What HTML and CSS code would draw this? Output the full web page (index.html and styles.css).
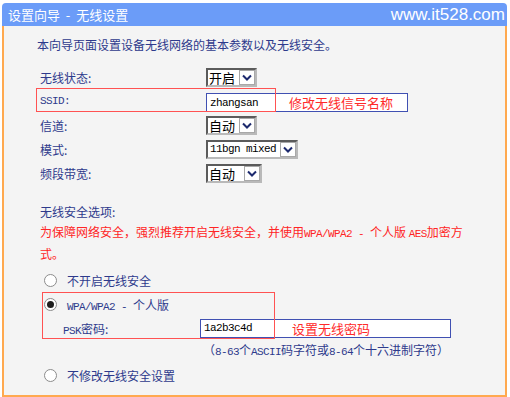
FILE: index.html
```
<!DOCTYPE html>
<html lang="zh-CN">
<head>
    <meta charset="UTF-8">
    <title>设置向导 - 无线设置</title>
    <link rel="stylesheet" href="styles.css">
</head>
<body>
<div class="page">
    <div class="titlebar">
        <span class="title">设置向导  -  无线设置</span>
        <span class="site">www.it528.com</span>
    </div>
    <div class="panel">
        <p class="intro">本向导页面设置设备无线网络的基本参数以及无线安全。</p>

        <div class="form">
            <div class="row">
                <span class="label">无线状态:</span>
                <span class="select w-short"><span class="opt">开启</span><span class="btn"><svg width="10" height="7" viewBox="0 0 10 7"><polyline points="1,1.5 5,5.5 9,1.5"/></svg></span></span>
            </div>
            <div class="row mark-wrap">
                <span class="label en">SSID:</span>
                <span class="field ssid"><span class="val en">zhangsan</span><span class="note">修改无线信号名称</span></span>
                <span class="mark mark-ssid"></span>
            </div>
            <div class="row">
                <span class="label">信道:</span>
                <span class="select w-short"><span class="opt">自动</span><span class="btn"><svg width="10" height="7" viewBox="0 0 10 7"><polyline points="1,1.5 5,5.5 9,1.5"/></svg></span></span>
            </div>
            <div class="row">
                <span class="label">模式:</span>
                <span class="select w-mode"><span class="opt en">11bgn mixed</span><span class="btn"><svg width="10" height="7" viewBox="0 0 10 7"><polyline points="1,1.5 5,5.5 9,1.5"/></svg></span></span>
            </div>
            <div class="row">
                <span class="label">频段带宽:</span>
                <span class="select w-band"><span class="opt">自动</span><span class="btn"><svg width="10" height="7" viewBox="0 0 10 7"><polyline points="1,1.5 5,5.5 9,1.5"/></svg></span></span>
            </div>
        </div>

        <p class="sec-title">无线安全选项:</p>
        <p class="warn">为保障网络安全，强烈推荐开启无线安全，并使用<span class="en">WPA/WPA2 - </span>个人版 <span class="en">AES</span>加密方<br>式。</p>

        <div class="opts">
            <div class="opt-row"><span class="radio"></span><span>不开启无线安全</span></div>
            <div class="wpa mark-wrap">
                <div class="opt-row"><span class="radio checked"></span><span><span class="en">WPA/WPA2 - </span>个人版</span></div>
                <div class="psk-row">
                    <span class="psk-label"><span class="en">PSK</span>密码:</span>
                    <span class="field psk"><span class="val en">1a2b3c4d</span><span class="note">设置无线密码</span></span>
                </div>
                <span class="mark mark-wpa"></span>
            </div>
            <div class="hint">（<span class="en">8-63</span>个<span class="en">ASCII</span>码字符或<span class="en">8-64</span>个十六进制字符）</div>
            <div class="opt-row last"><span class="radio"></span><span>不修改无线安全设置</span></div>
        </div>
    </div>
</div>
</body>
</html>
```

FILE: styles.css
```
body {
    margin: 0;
    background: #ffffff;
    font-family: "Noto Sans CJK SC", sans-serif;
    font-size: 12px;
    color: #2e3a8c;
}

p {
    margin: 0;
}

.en {
    font-family: "Liberation Mono", "Noto Sans CJK SC", monospace;
    font-size: 11px;
    letter-spacing: -0.6px;
}

.page {
    width: 505px;
    margin: 3px 0 0 2px;
}

.titlebar {
    height: 23px;
    background: #6b9cf8;
    border-radius: 4px 4px 0 0;
    display: flex;
    align-items: center;
    justify-content: space-between;
    color: #ffffff;
}

.title {
    font-size: 13px;
    padding-left: 6px;
    white-space: pre;
}

.site {
    font-family: "Liberation Sans", sans-serif;
    font-size: 17px;
    padding-right: 2px;
}

.panel {
    box-sizing: border-box;
    height: 371px;
    background: #f4f4f4;
    border: 2px solid #ffa94f;
    border-top: none;
    padding: 7px 0 0 33px;
}

.intro {
    line-height: 24px;
}

.form {
    margin-top: 8px;
    padding-left: 3px;
}

.row {
    display: flex;
    align-items: center;
    height: 24px;
}

.label {
    width: 166px;
}

.mark-wrap {
    position: relative;
}

.mark {
    position: absolute;
    border: 1.5px solid #ff5252;
    pointer-events: none;
}

.mark-ssid {
    left: -4px;
    top: -1px;
    width: 238px;
    height: 22px;
}

.select {
    box-sizing: border-box;
    display: inline-flex;
    align-items: center;
    height: 19px;
    background: #ffffff;
    border: 2px solid;
    border-color: #5b5b5b #b9b9b9 #b9b9b9 #5b5b5b;
    color: #000000;
}

.w-short {
    width: 51px;
}

.w-mode {
    width: 92px;
}

.w-band {
    width: 56px;
}

.opt {
    flex: 1;
    font-size: 13px;
    line-height: 15px;
    padding-left: 1px;
    white-space: pre;
}

.opt.en {
    font-size: 11px;
    padding-left: 2px;
}

.btn {
    box-sizing: border-box;
    width: 16px;
    height: 15px;
    border: 1px solid #a8a8a8;
    background: #ffffff;
    display: flex;
    align-items: center;
    justify-content: center;
}

.btn polyline {
    fill: none;
    stroke: #1d2a6e;
    stroke-width: 2;
}

.field {
    box-sizing: border-box;
    display: inline-flex;
    align-items: center;
    height: 19px;
    background: #ffffff;
    border: 1.5px solid #4050b2;
    color: #000000;
}

.field.ssid {
    width: 202px;
    margin-top: 3px;
}

.field.psk {
    width: 251px;
}

.val {
    padding-left: 3px;
}

.field.ssid .val {
    width: 79px;
}

.field.psk .val {
    width: 88px;
}

.note {
    font-size: 13px;
    color: #ff2a2a;
}

.sec-title {
    margin-top: 17px;
    padding-left: 3px;
    line-height: 20px;
}

.warn {
    padding-left: 3px;
    line-height: 20px;
    color: #ff2525;
}

.opts {
    margin-top: 4px;
    padding-left: 7px;
}

.opt-row {
    display: flex;
    align-items: center;
    gap: 10px;
    height: 24px;
}

.opt-row.last {
    margin-top: 3px;
}

.radio {
    box-sizing: border-box;
    width: 13px;
    height: 13px;
    border: 1px solid #8c8c8c;
    border-radius: 50%;
    background: #ffffff;
    display: flex;
    align-items: center;
    justify-content: center;
}

.radio.checked::after {
    content: "";
    width: 7px;
    height: 7px;
    border-radius: 50%;
    background: #1e1e1e;
}

.mark-wpa {
    left: -2px;
    top: 0;
    width: 231px;
    height: 45px;
}

.psk-row {
    display: flex;
    align-items: center;
    height: 24px;
    padding-left: 19px;
}

.psk-label {
    width: 137px;
}

.hint {
    height: 20px;
    line-height: 20px;
    padding-left: 159px;
}
```
